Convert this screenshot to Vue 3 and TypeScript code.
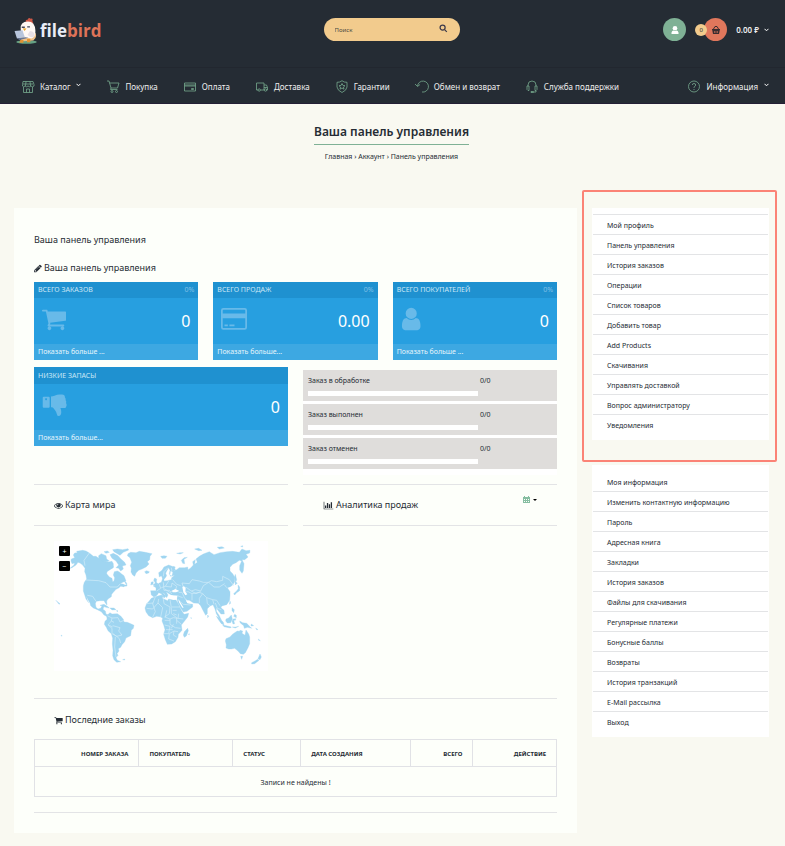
<script setup lang="ts">
interface NavItem { label: string; icon: string; arrow?: boolean }
interface Tile { title: string; percent: string; value: string; more: string; icon: string; box: string }

const glyphs: Record<string, string> = {
  cart: 'M704 1536q0 52-38 90t-90 38-90-38-38-90 38-90 90-38 90 38 38 90zm896 0q0 52-38 90t-90 38-90-38-38-90 38-90 90-38 90 38 38 90zm128-1088v512q0 24-16.5 42.5t-40.5 21.5l-1044 122q13 60 13 70 0 16-24 64h920q26 0 45 19t19 45-19 45-45 19h-1024q-26 0-45-19t-19-45q0-11 8-31.5t16-36 21.5-40 15.5-29.5l-177-823h-204q-26 0-45-19t-19-45 19-45 45-19h256q16 0 28.5 6.5t19.5 15.5 13 24.5 8 26 5.5 29.5 4.5 26h1201q26 0 45 19t19 45z',
  card: 'M160 130H1632Q1792 130 1792 290V1480Q1792 1640 1632 1640H160Q0 1640 0 1480V290Q0 130 160 130ZM180 250Q120 250 120 310V520H1672V310Q1672 250 1612 250ZM120 850V1460Q120 1520 180 1520H1612Q1672 1520 1672 1460V850ZM240 1280H470V1390H240ZM580 1280H930V1390H580Z',
  user: 'M1536 1399q0 109-62.5 187t-150.5 78h-854q-88 0-150.5-78t-62.5-187q0-85 8.5-160.5t31.5-152 58.5-131 94-89 134.5-34.5q131 128 313 128t313-128q76 0 134.5 34.5t94 89 58.5 131 31.5 152 8.5 160.5zm-256-887q0 159-112.5 271.5t-271.5 112.5-271.5-112.5-112.5-271.5 112.5-271.5 271.5-112.5 271.5 112.5 112.5 271.5z',
  thumb: 'M120 330H460Q530 330 530 400V1010Q530 1080 460 1080H120Q50 1080 50 1010V400Q50 330 120 330ZM280 430A65 65 0 1 0 281 430ZM620 310Q730 310 860 255Q1050 170 1210 170H1380Q1590 180 1580 380Q1660 450 1630 570Q1700 650 1660 760Q1760 920 1650 1060Q1600 1110 1480 1110H1270Q1330 1240 1330 1400Q1320 1640 1150 1660Q1050 1660 1020 1510Q990 1360 900 1260Q760 1050 700 1050H620Z',
  pencil: 'M491 1536l91-91-235-235-91 91v107h128v128h107zm523-928q0-22-22-22-10 0-17 7l-542 542q-7 7-7 17 0 22 22 22 10 0 17-7l542-542q7-7 7-17zm-54-192l416 416-832 832h-416v-416zm683 96q0 53-37 90l-166 166-416-416 166-165q36-38 90-38 53 0 91 38l235 234q37 39 37 91z',
  eye: 'M1664 960q-152-236-381-353 61 104 61 225 0 185-131.5 316.5t-316.5 131.5-316.5-131.5-131.5-316.5q0-121 61-225-229 117-381 353 133 205 333.5 326.5t434.5 121.5 434.5-121.5 333.5-326.5zm-720-384q0-20-14-34t-34-14q-125 0-214.5 89.5t-89.5 214.5q0 20 14 34t34 14 34-14 14-34q0-86 61-147t147-61q20 0 34-14t14-34zm848 384q0 34-20 69-140 230-376.5 368.5t-499.5 138.5-499.5-139-376.5-368q-20-35-20-69t20-69q140-229 376.5-368t499.5-139 499.5 139 376.5 368q20 35 20 69z',
  chart: 'M0 128H128V1536H1920V1664H0ZM256 896H512V1408H256ZM640 384H896V1408H640ZM1024 640H1280V1408H1024ZM1408 256H1664V1408H1408Z',
}

const nav: NavItem[] = [
  { label: 'Каталог', arrow: true, icon: 'M1 1.5H11L12 4.5V6Q10.5 7.5 9 6Q7.500 7.500 6 6Q4.500 7.500 3 6Q1.500 7.500 .5 6V4.500ZM1 4H11M4 1.500L3.500 6M8 1.500L8.500 6M1.500 7V12.500H10.500V7M4.500 12.500V9H7.500V12.500' },
  { label: 'Покупка', icon: 'M0 1H2L4 8H10.500L12 3H2.500M4 8L3.500 9.500H10.500M4 11.500A1 1 0 1 0 6 11.500A1 1 0 1 0 4 11.500M8.500 11.500A1 1 0 1 0 10.500 11.500A1 1 0 1 0 8.500 11.500' },
  { label: 'Оплата', icon: 'M.5 3H11.500V11H.5ZM.5 5H11.500M.5 6H11.500M7.500 8.500H9.500V9.500H7.500Z' },
  { label: 'Доставка', icon: 'M2 10H.5V3H8V10H4.500M8 5H10.500L11.500 7.500V10H10.800M8 7.500H11.500M2 10A1.200 1.200 0 1 0 4.400 10A1.200 1.200 0 1 0 2 10M8.300 10A1.200 1.200 0 1 0 10.700 10A1.200 1.200 0 1 0 8.300 10' },
  { label: 'Гарантии', icon: 'M6 .7Q8 2.500 11 2.300V7Q10.500 10.500 6 12.500Q1.500 10.500 1 7V2.300Q4 2.500 6 .7ZM6 3.500L7 5.500L9 5.700L7.500 7L8 9.200L6 8L4 9.200L4.500 7L3 5.700L5 5.500Z' },
  { label: 'Обмен и возврат', icon: 'M1.500 6A5.500 5.500 0 1 1 6 12M-1 4L1.500 6.500L4 4.500' },
  { label: 'Служба поддержки', icon: 'M2 6V5Q2 1 6 1Q10 1 10 5V6M1 6H3V10.500H2L1 9.500ZM11 6H9V10.500H10L11 9.500ZM10 10.500V12H7.500M5 11.500H7.500V12.500H5Z' },
]

const tiles: Tile[] = [
  { title: 'ВСЕГО ЗАКАЗОВ', percent: '0%', value: '0', more: 'Показать больше ...', icon: 'cart', box: '64 0 1664 1792' },
  { title: 'ВСЕГО ПРОДАЖ', percent: '0%', value: '0.00', more: 'Показать больше...', icon: 'card', box: '0 0 1792 1792' },
  { title: 'ВСЕГО ПОКУПАТЕЛЕЙ', percent: '0%', value: '0', more: 'Показать больше ...', icon: 'user', box: '192 0 1408 1792' },
]
const lowStock: Tile = { title: 'НИЗКИЕ ЗАПАСЫ', percent: '', value: '0', more: 'Показать больше...', icon: 'thumb', box: '0 0 1792 1792' }

const statuses = ['Заказ в обработке', 'Заказ выполнен', 'Заказ отменен']
const sellerLinks = ['Мой профиль', 'Панель управления', 'История заказов', 'Операции', 'Список товаров', 'Добавить товар', 'Add Products', 'Скачивания', 'Управлять доставкой', 'Вопрос администратору', 'Уведомления']
const accountLinks = ['Моя информация', 'Изменить контактную информацию', 'Пароль', 'Адресная книга', 'Закладки', 'История заказов', 'Файлы для скачивания', 'Регулярные платежи', 'Бонусные баллы', 'Возвраты', 'История транзакций', 'E-Mail рассылка', 'Выход']

const land: string[] = [
  'M124 266L134 262L130 254L134 248L142 247L140 243L158 240L168 242L178 248L190 258L198 258L206 264L216 266L224 273L236 275L246 273L250 280L250 292L240 298L231 304L230 310L238 320L246 324L248 334L252 332L254 322L250 314L253 304L262 302L268 305L274 310L282 316L288 332L278 336L270 340L278 341L284 345L282 349L272 348L266 353L258 357L250 366L245 372L244 379L234 386L230 392L231 404L226 398L222 391L210 391L199 393L196 400L198 411L204 416L212 414L216 407L222 408L219 417L226 422L228 431L240 436L234 440L222 434L214 424L202 418L190 413L182 406L180 398L173 386L169 376L172 390L176 397L168 386L164 374L160 362L160 346L163 336L170 326L168 314L164 304L165 294L158 284L150 278L144 276L138 284L126 292L120 294L132 284L134 278L126 280L123 272Z',
  'M294 250L302 246L318 247L328 243L346 246L356 248L366 250L360 258L359 268L352 274L357 281L348 290L336 296L326 300L318 308L314 318L308 314L303 305L304 294L301 286L305 276L300 262L292 256Z',
  'M344 304L350 301L358 304L356 308L348 310Z',
  'M206 256L214 250L228 256L230 266L238 272L226 275L214 270L206 264ZM222 244L232 242L238 246L228 249ZM240 253L250 249L264 256L272 265L284 276L288 284L277 287L280 296L272 302L266 294L258 292L266 284L258 272L246 264ZM248 238L262 236L278 238L294 235L296 239L280 246L270 255L262 250L252 244ZM240 284L246 281L250 290L244 294Z',
  'M264 341L276 342L290 345L286 338L282 330L290 338L291 347L280 348Z',
  'M210 405L222 402L232 408L238 413L228 411ZM240 413L252 413L258 418L246 419ZM260 420L264 422L261 424Z',
  'M230 436L240 427L246 431L262 430L272 437L280 447L282 455L292 456L304 461L312 465L310 474L304 480L302 496L288 503L284 514L276 523L272 531L265 535L267 542L261 550L264 555L258 562L262 570L272 574L260 576L252 568L248 556L249 540L247 520L248 504L244 490L234 481L229 471L223 462L225 453L231 447Z',
  'M278 568L284 566L284 569Z',
  'M364 384L376 379L394 374L399 377L397 384L408 389L413 391L416 386L428 389L438 389L443 397L449 410L455 421L462 432L476 429L473 440L463 453L454 464L456 480L445 492L444 501L436 514L425 521L412 522L406 508L401 492L405 478L401 464L396 452L398 443L390 439L380 438L368 442L356 436L348 425L345 413L350 400L357 393Z',
  'M473 474L475 481L469 497L463 501L460 494L463 484Z',
  'M364 374L362 361L378 361L378 352L370 347L382 343L388 338L394 336L398 324L402 326L402 332L412 331L424 328L425 322L434 315L422 318L418 310L420 300L416 292L410 302L407 309L410 316L404 325L398 325L394 316L388 320L386 307L396 300L402 290L416 284L432 290L436 298L428 302L440 298L448 292L464 292L473 290L474 298L482 293L490 284L488 274L496 268L494 282L502 276L498 266L508 258L520 251L538 244L552 253L570 247L590 244L608 243L628 246L636 236L648 241L660 240L659 248L648 252L654 260L644 268L636 268L642 280L640 302L636 309L629 299L629 286L635 272L628 270L618 277L608 282L600 291L600 302L608 310L614 320L614 334L608 344L601 349L592 352L600 364L600 374L599 390L590 403L578 406L570 410L582 420L583 431L573 431L565 421L559 412L559 423L568 436L574 449L568 444L559 430L555 416L549 403L540 407L532 415L532 430L527 435L518 418L512 406L505 399L491 398L478 390L470 389L468 392L476 400L488 402L488 410L471 423L460 425L452 413L444 398L441 384L443 376L424 374L415 369L408 364L414 374L410 382L404 371L396 365L408 378L402 383L394 370L386 367L381 375L372 380Z',
  'M374 323L380 326L379 336L386 342L376 346L369 344L376 338L371 330ZM364 335L370 334L369 342L362 344Z',
  'M392 258L402 256L411 258L406 264L396 264ZM440 249L450 247L460 247L450 251ZM458 279L454 270L462 262L472 261L462 267L464 280ZM494 236L506 234L516 240L506 241ZM562 231L576 229L583 233L568 236ZM632 228L638 226L638 230ZM430 288L436 290L433 294Z',
  'M616 312L620 328L617 336L613 322ZM615 334L622 338L616 344ZM624 344L629 350L629 361L620 367L614 374L611 370L619 363L625 355Z',
  'M600 392L602 399L598 402ZM568 410L574 408L573 413ZM533 434L536 438L533 442Z',
  'M559 438L568 443L580 456L582 464L574 460L566 449ZM588 446L596 443L604 434L607 446L602 457L592 458L587 452ZM578 464L592 467L604 470L601 473L582 469ZM609 446L618 445L616 450L611 450L614 460L609 461L606 453ZM606 412L613 418L611 427L606 421ZM614 432L619 435L619 442L611 438ZM629 452L638 457L650 459L660 469L665 474L653 471L643 474L641 466L631 458ZM607 470L618 470L626 468L616 473ZM664 461L671 466L663 467ZM677 473L684 478L680 478ZM685 506L691 511L686 510Z',
  'M586 512L588 505L600 500L606 493L614 487L622 482L628 483L630 480L638 482L636 489L645 495L648 479L656 491L659 500V520L654 532L646 547L640 552L631 550L624 542L614 534L604 536L596 536L588 533L589 523ZM632 558L638 558L635 567Z',
  'M690 551L694 560L690 568L684 565ZM683 567L687 570L674 580L665 581L665 577L675 572Z',
  'M78 390L84 396L90 400L87 402ZM93 495L96 495L95 498ZM475 492L478 490L478 493ZM482 442L484 442L484 445Z',
]
const borders = 'M178 248L162 270L165 286M168 329L206 331L228 337L240 350L262 350L270 341M172 375L188 378L198 393M248 470L236 464M232 436L246 443L244 452L252 456M246 443L264 442L270 455L282 450M244 452L234 464L246 474L246 490L260 498L276 494L266 482L270 472L248 466M249 490L260 498L268 505L272 518M256 500L254 530L258 560M376 380L368 400L376 424L368 440M386 386L384 398L398 412L392 440M400 386L402 400L420 410L418 430L404 440M420 388L424 412L424 430L440 442L440 460M426 410H450M404 440L420 446L430 442L444 444L460 446M420 446V462L436 472L452 474M404 464L420 468L416 490L402 490M418 490L432 482L444 484M418 490L416 506L432 512M432 482L430 494L440 500M350 414L368 416L384 398M348 400L370 398M410 420L406 440M440 450L454 462M428 420L440 420M430 462L424 474M404 450H420M408 478H428M444 444L446 430M380 362L392 354L388 342M394 352L406 348L416 332M406 348L424 350L426 338L440 348L436 360L420 364M400 336L402 360L420 360M404 356L426 370M428 328L440 342L452 346M460 350L456 338L478 340L486 328L508 332L520 336L536 336L544 331L560 334L578 330L578 318L598 328L611 346M460 350L470 352L484 362L496 358L512 362L520 346L536 336M536 336L552 350L568 350L584 340M460 366L474 364L486 370L486 390M486 370L508 366L518 370L508 384L508 398M518 370L530 382L548 388L552 402M548 388L560 390L570 406M446 366L456 366L464 384L472 390M446 390L460 402L482 404M442 376L458 382M414 292L402 304L400 318M424 292L426 304M430 430L440 434M556 398L562 414L574 418M530 382L532 400L540 406M484 362L498 370L512 364M590 352L584 344'
</script>

<template>
  <div class="page">
    <header>
      <div class="topbar">
        <a class="logo" href="#" aria-label="filebird">
          <svg viewBox="0 0 66 76" aria-hidden="true">
            <ellipse cx="36" cy="70" rx="30" ry="5" fill="#65a184" />
            <path d="M14 46Q20 38 34 40L62 44Q68 56 56 66L28 68Q12 62 14 46Z" fill="#f0c28b" />
            <path d="M34 12Q32 4 39 5Q42-3 48 2Q56 0 53 8L56 16L36 16Z" fill="#cf5948" />
            <path d="M19 32Q17 10 40 10Q61 10 62 37Q63 56 50 60L29 58Q20 52 19 32Z" fill="#fff8f4" />
            <path d="M46 38Q62 40 59 54Q46 60 39 49" fill="#e8dfe4" />
            <path d="M22 27H31M38 26H46" stroke="#46485a" stroke-width="4" />
            <path d="M25 30L36 31L30 38Z" fill="#e9a72d" />
            <path d="M1 38L24 36L31 56L8 60Z" fill="#b8c5dc" />
            <path d="M8 60L33 56L42 58L16 64Z" fill="#687796" />
            <path d="M18 64H27V72H15ZM38 61H47V71H37Z" fill="#e29435" />
          </svg>
          <span class="file">file</span><span class="bird">bird</span>
        </a>
        <form class="search" @submit.prevent>
          <input type="search" placeholder="Поиск" aria-label="Поиск">
          <button type="submit" aria-label="Найти">
            <svg viewBox="0 0 10 10"><circle cx="4" cy="4" r="2.800" /><path d="M6.200 6.200L8.700 8.700" /></svg>
          </button>
        </form>
        <div class="tools">
          <a class="round account" href="#" aria-label="Аккаунт">
            <svg viewBox="0 0 10 10"><circle cx="5" cy="3.300" r="2.300" /><path d="M1.500 9V7.500Q2 5.700 3.500 5.500Q5 6.700 6.500 5.500Q8 5.700 8.500 7.500V9Z" /></svg>
          </a>
          <a class="round basket" href="#" aria-label="Корзина">
            <span class="badge">0</span>
            <svg viewBox="0 0 10 10"><path d="M1 4.500H9M2.300 4.300L4 1.500H6L7.700 4.300" fill="none" stroke="currentColor" /><path fill-rule="evenodd" d="M1.200 5H8.800L8 9H2ZM3 6V8H3.600V6ZM4.700 6V8H5.300V6ZM6.400 6V8H7V6Z" /></svg>
          </a>
          <button class="total" type="button">0.00 ₽
            <svg class="chev" viewBox="0 0 5 4"><path d="M.5 .8L2.500 2.800L4.500 .8" /></svg>
          </button>
        </div>
      </div>
      <nav>
        <a v-for="item in nav" :key="item.label" href="#">
          <svg class="line" viewBox="0 0 12 13"><path :d="item.icon" /></svg>{{ item.label }}
          <svg v-if="item.arrow" class="chev up" viewBox="0 0 5 4"><path d="M.5 .8L2.500 2.800L4.500 .8" /></svg>
        </a>
        <a class="last" href="#">
          <svg class="line" viewBox="0 0 12 13"><circle cx="6" cy="6.500" r="5.500" /><path d="M4.300 5Q4.300 3.500 6 3.500Q7.700 3.500 7.700 5Q7.700 6 6.500 6.500Q6 6.800 6 8M6 9V10" /></svg>Информация
          <svg class="chev up" viewBox="0 0 5 4"><path d="M.5 .8L2.500 2.800L4.500 .8" /></svg>
        </a>
      </nav>
    </header>

    <section class="intro">
      <h1>Ваша панель управления</h1>
      <div class="crumbs"><a href="#">Главная</a> › <a href="#">Аккаунт</a> › <a href="#">Панель управления</a></div>
    </section>

    <div class="columns">
      <main>
        <h2>Ваша панель управления</h2>
        <h2 class="sub"><svg class="fa narrow" viewBox="128 0 1536 1792"><path :d="glyphs.pencil" /></svg>Ваша панель управления</h2>
        <div class="tiles">
          <article v-for="tile in tiles" :key="tile.title" class="tile">
            <div class="tile-head"><span>{{ tile.title }}</span><span class="pct">{{ tile.percent }}</span></div>
            <div class="tile-body"><svg :viewBox="tile.box"><path fill-rule="evenodd" :d="glyphs[tile.icon]" /></svg><strong>{{ tile.value }}</strong></div>
            <a class="tile-foot" href="#">{{ tile.more }}</a>
          </article>
        </div>
        <div class="halves">
          <article class="tile low">
            <div class="tile-head"><span>{{ lowStock.title }}</span></div>
            <div class="tile-body"><svg :viewBox="lowStock.box"><path fill-rule="evenodd" :d="glyphs.thumb" /></svg><strong>{{ lowStock.value }}</strong></div>
            <a class="tile-foot" href="#">{{ lowStock.more }}</a>
          </article>
          <div class="statuses">
            <div v-for="s in statuses" :key="s" class="status">
              <span>{{ s }}</span><span>0/0</span>
              <div class="track" role="progressbar" aria-valuenow="0" :aria-label="s"></div>
            </div>
          </div>
        </div>
        <div class="halves heads">
          <div class="ruled">
            <h2><svg class="fa" viewBox="0 0 1792 1792"><path :d="glyphs.eye" /></svg>Карта мира</h2>
          </div>
          <div class="ruled">
            <h2><svg class="fa wide" viewBox="0 0 1920 1792"><path :d="glyphs.chart" /></svg>Аналитика продаж</h2>
            <button class="range" type="button" aria-label="Период">
              <svg viewBox="0 0 7 7"><path fill-rule="evenodd" d="M0 1H1V0H2V1H5V0H6V1H7V7H0ZM1 3V4H2V3ZM3 3V4H4V3ZM5 3V4H6V3ZM1 5V6H2V5ZM3 5V6H4V5ZM5 5V6H6V5Z" /></svg>
              <span class="caret"></span>
            </button>
          </div>
        </div>
        <div class="map">
          <svg viewBox="72 212 642 390" role="img" aria-label="Карта мира">
            <path v-for="(shape, i) in land" :key="i" class="land" :d="shape" />
            <path class="borders" :d="borders" />
            <path class="sea" d="M457 350L462 348L467 354L466 364L472 372L466 375L460 366ZM426 361L436 356L448 362L438 366L428 366ZM420 374L430 376L441 376L440 386L430 388ZM445 386L451 396L461 412L457 412L447 396ZM466 386L473 394L484 395L481 398L472 399ZM422 302L420 314L426 316L428 306Z" />
          </svg>
          <div class="zoomers">
            <button type="button" aria-label="Увеличить">+</button>
            <button type="button" aria-label="Уменьшить">−</button>
          </div>
        </div>
        <section class="orders">
          <h2><svg class="fa" viewBox="0 0 1792 1792"><path :d="glyphs.cart" /></svg>Последние заказы</h2>
          <table>
            <colgroup><col class="c1"><col class="c2"><col class="c3"><col class="c4"><col class="c5"><col class="c6"></colgroup>
            <thead><tr><th class="r">НОМЕР ЗАКАЗА</th><th>ПОКУПАТЕЛЬ</th><th>СТАТУС</th><th>ДАТА СОЗДАНИЯ</th><th class="r">ВСЕГО</th><th class="r">ДЕЙСТВИЕ</th></tr></thead>
            <tbody><tr><td colspan="6">Записи не найдены !</td></tr></tbody>
          </table>
        </section>
      </main>
      <aside>
        <div class="panel seller">
          <ul><li v-for="l in sellerLinks" :key="l"><a href="#">{{ l }}</a></li></ul>
        </div>
        <div class="panel">
          <ul><li v-for="l in accountLinks" :key="l"><a href="#">{{ l }}</a></li></ul>
        </div>
      </aside>
    </div>
  </div>
</template>

<style>
body { margin: 0; background: #f9f9f1; }
</style>

<style scoped>
* { box-sizing: border-box; }
.page { font-family: "Noto Sans", "Open Sans", sans-serif; font-size: 7px; line-height: 10px; color: #252c34; padding-bottom: 12px; }
a { color: inherit; text-decoration: none; }
button { font: inherit; border: 0; background: none; padding: 0; color: inherit; }
svg { display: block; flex: none; }
h1, h2, ul { margin: 0; padding: 0; font-weight: 400; }
header { background: #252c34; color: #eeeeee; border-bottom: 1px solid #241f36; }
.topbar { height: 68px; padding: 18px 16px 0 14px; display: grid; grid-template-columns: 1fr 136px 1fr; align-items: start; border-bottom: 1px solid #22272f; }
.logo { display: flex; align-items: center; font: 700 17px/26px "Open Sans", sans-serif; }
.logo svg { width: 23px; height: 26px; margin-right: 3px; }
.file { color: #e9edf6; }
.bird { color: #de7358; }
.search { display: flex; height: 23px; border-radius: 12px; background: #f2cb8d; padding: 0 12px 0 11px; align-items: center; }
.search input { flex: 1; min-width: 0; border: 0; padding: 0; background: none; outline: 0; font: 6px/10px "Noto Sans", sans-serif; color: #252c34; }
.search input::placeholder { color: #4b4a40; opacity: 1; }
.search svg { width: 9px; height: 9px; margin-bottom: 2px; fill: none; stroke: #3d3a4b; stroke-width: 1.4; }
.tools { display: flex; justify-content: flex-end; align-items: center; }
.round { position: relative; width: 23px; height: 23px; border-radius: 50%; display: flex; align-items: center; justify-content: center; }
.round svg { width: 10px; height: 10px; fill: currentColor; }
.account { background: #7fb195; color: #fff; }
.basket { background: #e0775c; color: #3a2d30; margin: 0 9px 0 18px; }
.badge { position: absolute; left: -9px; top: 6px; width: 12px; height: 12px; border-radius: 50%; background: #f2cb8d; color: #252c34; font-size: 6px; line-height: 12px; text-align: center; }
.total { display: flex; align-items: center; gap: 5px; font: 600 8px/10px "Noto Sans", sans-serif; }
.chev { width: 5px; height: 4px; fill: none; stroke: #fff; stroke-width: 1; }
.up { margin: -4px 0 0; }
nav { height: 35px; padding: 2px 16px 0 22px; display: flex; align-items: center; gap: 26px; font-size: 8px; line-height: 12px; white-space: nowrap; }
nav a { display: flex; align-items: center; gap: 6px; }
.line { width: 12px; height: 13px; fill: none; stroke: #76a98e; stroke-width: .8; overflow: visible; }
.last { margin-left: auto; }
.intro { padding: 20px 2px 46px 0; text-align: center; }
h1 { display: inline-block; font-size: 12px; line-height: 16px; font-weight: 600; padding: 0 0 4px; border-bottom: 1px solid #7fb195; }
.crumbs { margin-top: 7px; }
.columns { padding: 0 16px 0 14px; display: grid; grid-template-columns: minmax(0, 563fr) minmax(0, 177fr); gap: 15px; align-items: start; }
main { background: #fdfffa; padding: 26px 20px 20px; }
h2 { font-size: 9px; line-height: 12px; display: flex; align-items: center; gap: 2px; }
.fa { width: 9px; height: 9px; fill: #252c34; }
.wide { width: 11px; }
.narrow { width: 8px; }
.sub { margin: 16px 0 8px; }
.tiles { display: grid; grid-template-columns: repeat(3, minmax(0, 1fr)); gap: 15px; }
.tile { background: #279fe0; color: #e6f5fc; }
.tile-head { display: flex; justify-content: space-between; height: 16px; padding: 0 4px; line-height: 15px; background: #1f91d0; color: #cbe7f6; }
.pct { color: #7fc0e7; }
.low .tile-head { height: 17px; line-height: 17px; }
.tile-body { height: 46px; padding: 0 8px; display: flex; justify-content: space-between; align-items: center; }
.tile-body svg { width: auto; height: 26px; margin-bottom: 5px; fill: #68bae9; }
.tile-body strong { font-size: 16px; line-height: 20px; font-weight: 400; color: #fff; }
.tile-foot { display: block; height: 16px; padding: 0 4px; line-height: 15px; background: #3da8e2; }
.halves { display: grid; grid-template-columns: repeat(2, minmax(0, 1fr)); gap: 15px; margin-top: 7px; align-items: start; }
.statuses { margin-top: 3px; display: grid; gap: 3px; background: #fff; padding-bottom: 6px; }
.status { height: 31px; background: #dfdddb; padding: 6px 5px 5px; display: grid; grid-template-columns: 170px auto; column-gap: 2px; row-gap: 5px; }
.track { height: 5px; background: #fff; }
.heads { margin-top: 9px; }
.ruled { height: 42px; padding: 0 20px; border: solid #e3e4e6; border-width: 1px 0; display: flex; justify-content: space-between; align-items: center; }
.range { display: flex; align-items: center; gap: 3px; align-self: flex-start; margin-top: 11px; }
.range svg { width: 7px; height: 7px; fill: #86bea1; }
.caret { border: 2px solid transparent; border-top-color: #000; border-bottom: 0; }
.map { position: relative; width: 214px; margin: 15px 20px 0; background: #fff; }
.map svg { width: 100%; height: auto; }
.land { fill: #9fd5f1; stroke: #9fd5f1; stroke-width: 1; }
.borders { fill: none; stroke: #d3edf9; stroke-width: 2; }
.sea { fill: #fff; }
.zoomers { position: absolute; left: 5px; top: 5px; display: grid; gap: 5px; }
.zoomers button { width: 11px; height: 10px; border-radius: 1px; background: #000; color: #fff; font-size: 7px; line-height: 9px; text-align: center; }
.orders { margin-top: 27px; padding-bottom: 15px; border: solid #e3e4e6; border-width: 1px 0; }
.orders h2 { padding: 15px 20px 13px; }
table { width: 100%; border-collapse: collapse; table-layout: fixed; }
.c1 { width: 20%; } .c2 { width: 18%; } .c3 { width: 13%; } .c4 { width: 21%; } .c5 { width: 12%; } .c6 { width: 16%; }
th, td { border: 1px solid #e1e2e6; padding: 9px 10px 7px; text-align: left; }
th { font-size: 6px; line-height: 10px; font-weight: 700; white-space: nowrap; }
th.r { text-align: right; }
td { text-align: center; padding: 11px 10px 9px; line-height: 9px; }
aside { display: grid; gap: 25px; }
.panel { position: relative; background: #fff; padding: 7px 1px 5px; }
.seller { padding: 6px 1px 5px; }
.seller ul { border-top: 1px solid #e3e4e6; }
.seller::after { content: ""; position: absolute; inset: -18px -8px -22px -10px; border: 2px solid #fb8376; border-radius: 2px; pointer-events: none; }
ul { list-style: none; }
li { height: 20px; border-bottom: 1px solid #e3e4e6; padding: 1px 0 0 14px; }
li:last-child { border-bottom: 0; }
li a { display: block; line-height: 20px; }
</style>
